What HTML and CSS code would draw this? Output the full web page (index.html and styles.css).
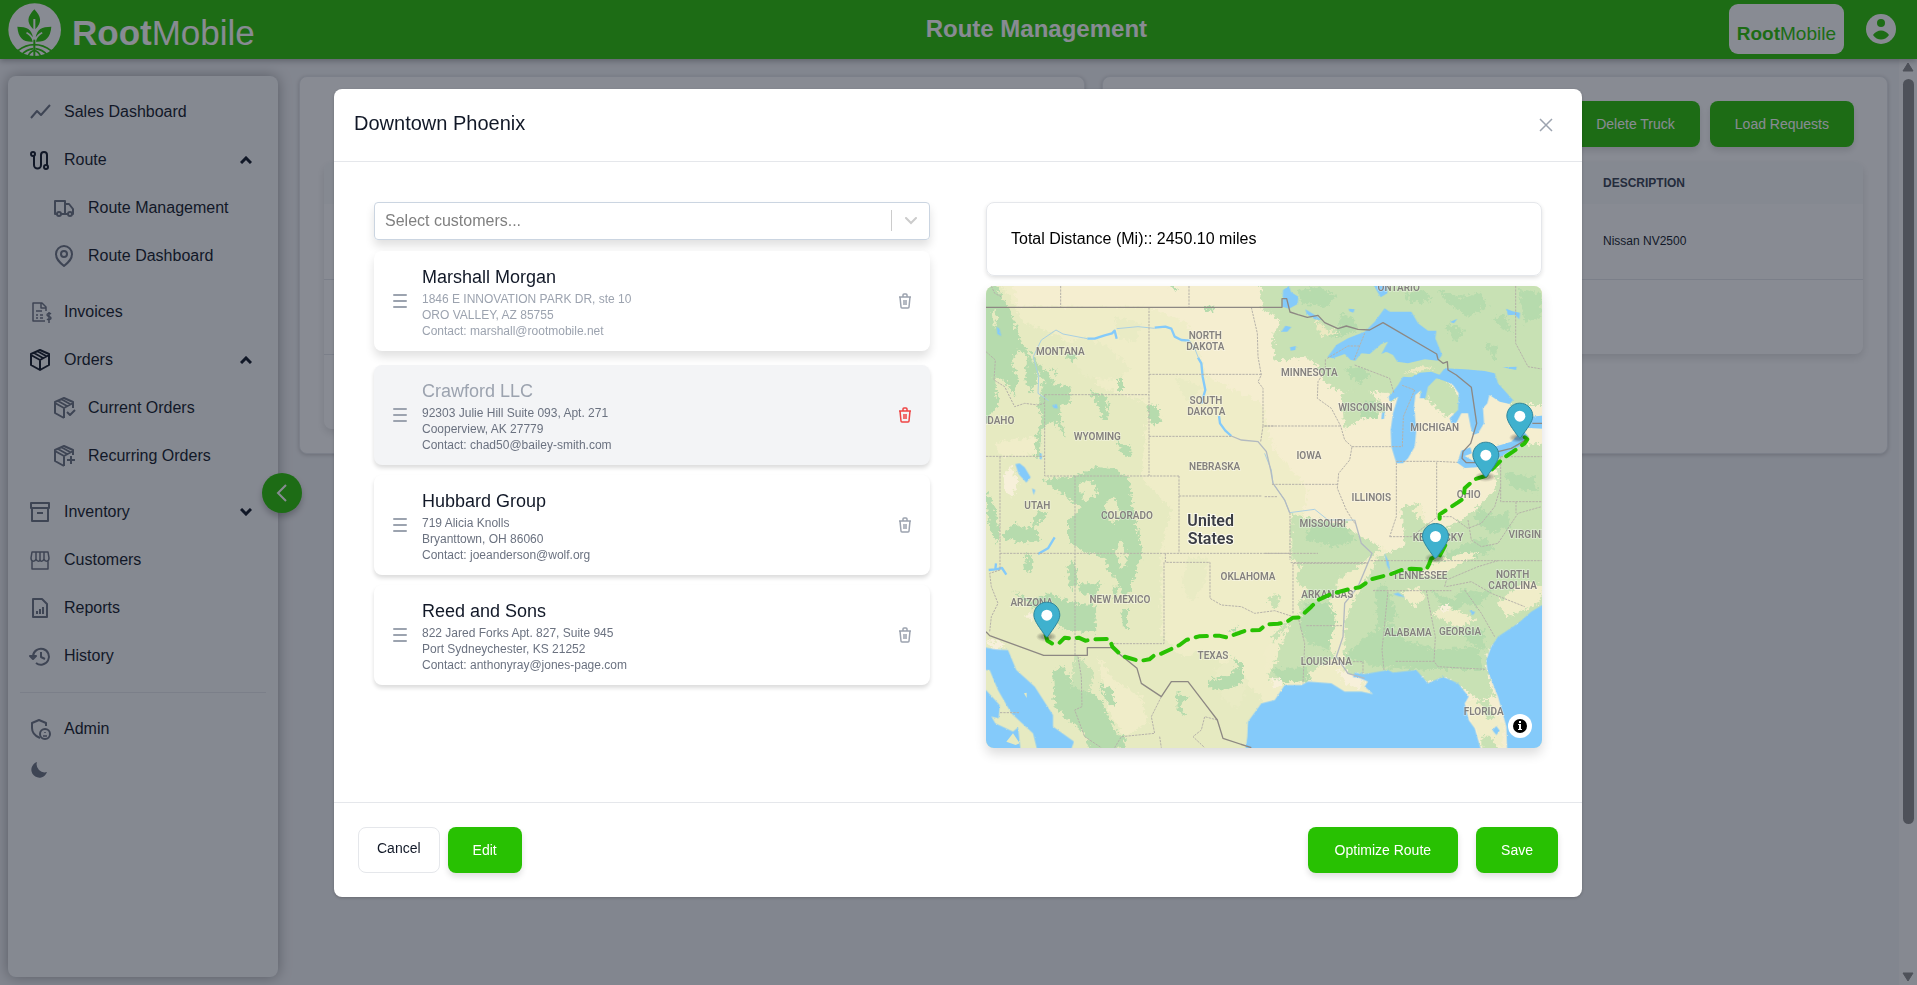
FILE: index.html
```html
<!DOCTYPE html>
<html lang="en">
<head>
<meta charset="utf-8">
<title>Route Management</title>
<link rel="stylesheet" href="styles.css">
</head>
<body>
<header class="topbar">
  <a class="brand" href="#">
    <svg class="brand-mark" viewBox="0 0 159 162" aria-hidden="true">
      <circle cx="80" cy="80" r="79" fill="#fff"/>
      <g fill="#28c102">
        <path d="M79 19C57 42 55 58 76 79V48h6v31C103 58 100 41 79 19z"/>
        <path d="M28 71c3 34 17 46 46 45-2-10-7-17-20-25l3-4c9 5 14 10 18 16C71 79 57 71 28 71z"/>
        <path d="M130 71c-3 34-17 46-46 45 2-10 7-17 20-25l-3-4c-9 5-14 10-18 16 4-24 18-32 47-32z"/>
        <path d="M76 110h6v52h-6z"/>
      </g>
      <g fill="none" stroke="#28c102" stroke-width="5">
        <path d="M30 143c14-11 30-18 49-18s36 7 50 18"/>
        <path d="M40 156c10-11 20-17 36-19M118 156c-10-11-20-17-36-19M60 160c4-10 9-15 19-18 10 3 15 8 19 18"/>
      </g>
    </svg>
    <span class="wordmark"><b>Root</b>Mobile</span>
  </a>
  <h1 class="page-title">Route Management</h1>
  <div class="account">
    <span class="company wordmark"><b>Root</b>Mobile</span>
    <button class="avatar" aria-label="Account">
      <svg viewBox="0 0 30 30"><circle cx="15" cy="15" r="15" fill="#fff"/><circle cx="15" cy="9" r="4" fill="#28c102"/><path d="M7 21c4-6 12-6 16 0-4 6-12 6-16 0z" fill="#28c102"/></svg>
    </button>
  </div>
</header>

<div class="shell">
  <nav class="sidebar" aria-label="Main">
    <ul class="menu">
      <li><a class="item" href="#"><svg class="icon" viewBox="0 0 24 24"><path d="M3 18l6-7 4 4 9-10"/></svg><span>Sales Dashboard</span></a></li>
      <li>
        <button class="item open"><svg class="icon" viewBox="0 0 24 24"><circle cx="5" cy="6" r="2"/><circle cx="18" cy="19" r="2"/><path d="M6 8v9a3.500 3.500 0 0 0 7 0V7a3 3 0 0 1 6 0v10"/></svg><span>Route</span><svg class="chev" viewBox="0 0 12 8"><path d="M1 7l5-5 5 5"/></svg></button>
        <ul class="submenu">
          <li><a class="item" href="#"><svg class="icon" viewBox="0 0 24 24"><path d="M5 18H3V5h10v13H9M13 8h4l4 5v5h-1M13 18h3"/><circle cx="7" cy="18" r="2"/><circle cx="18" cy="18" r="2"/></svg><span>Route Management</span></a></li>
          <li><a class="item" href="#"><svg class="icon" viewBox="0 0 24 24"><path d="M12 22c-5-4-8-7-8-12a8 8 0 0 1 16 0c0 5-3 8-8 12z"/><circle cx="12" cy="10" r="3"/></svg><span>Route Dashboard</span></a></li>
        </ul>
      </li>
      <li><a class="item" href="#"><svg class="icon thin" viewBox="0 0 24 24"><path d="M17 21H5V3h9l4 4v4M13 3v5h5M8 11h6M8 15h2M12 15h3M8 18h2M12 18h3M23 14c-1-1-4-1-4 1s4 1 4 3-3 2-4 1M21 12v11"/></svg><span>Invoices</span></a></li>
      <li>
        <button class="item open"><svg class="icon" viewBox="0 0 24 24"><path d="M12 2l9 4v11l-9 5-9-5V6zM3 7l9 5 9-5M12 12v10M6 5l9 5M9 3l9 5"/></svg><span>Orders</span><svg class="chev" viewBox="0 0 12 8"><path d="M1 7l5-5 5 5"/></svg></button>
        <ul class="submenu">
          <li><a class="item" href="#"><svg class="icon" viewBox="0 0 24 24"><path d="M21 12V6l-9-4-9 4v11l9 5M3 7l9 5 9-5M12 12v10M6 5l9 5M9 3l9 5M15 16l3 3 5-5"/></svg><span>Current Orders</span></a></li>
          <li><a class="item" href="#"><svg class="icon" viewBox="0 0 24 24"><path d="M21 11V6l-9-4-9 4v11l9 5M3 7l9 5 9-5M12 12v10M6 5l9 5M9 3l9 5M15 16h8M19 12v8"/></svg><span>Recurring Orders</span></a></li>
        </ul>
      </li>
      <li><button class="item"><svg class="icon" viewBox="0 0 24 24"><path d="M3 3h18v5H3zM4 8v13h16V8M9 13h6"/></svg><span>Inventory</span><svg class="chev" viewBox="0 0 12 8"><path d="M1 1l5 5 5-5"/></svg></button></li>
      <li><a class="item" href="#"><svg class="icon thin" viewBox="0 0 24 24"><path d="M4 4h16l1 6c0 4-4 4-5 1-1 3-4 3-4 0 0 3-3 3-4 0-1 3-5 3-5-1zM4 13v8h16v-8M8 4v7M12 4v7M16 4v7"/></svg><span>Customers</span></a></li>
      <li><a class="item" href="#"><svg class="icon" viewBox="0 0 24 24"><path d="M5 3h9l5 5v13H5zM9 18v-3M12 18v-5M15 18v-7"/></svg><span>Reports</span></a></li>
      <li><a class="item" href="#"><svg class="icon" viewBox="0 0 24 24"><path d="M5 12a8 8 0 1 1 3 7M2 12h6l-3 3zM13 8v5l4 2"/></svg><span>History</span></a></li>
    </ul>
    <hr class="rule">
    <a class="item" href="#"><svg class="icon" viewBox="0 0 24 24"><path d="M12 21c-5-2-8-6-8-10V6l7-3 7 3v3"/><circle cx="17" cy="17" r="5"/><path class="hair" d="M15 19h4M17 15v1"/></svg><span>Admin</span></a>
    <button class="theme" aria-label="Dark mode"><svg viewBox="0 0 20 20"><path d="M17 13A8 8 0 0 1 7 3a8 8 0 1 0 10 10z"/></svg></button>
  </nav>
  <button class="collapse" aria-label="Collapse menu"><svg viewBox="0 0 20 20"><path d="M14 2l-8 8 8 8"/></svg></button>

  <main class="content">
    <section class="panel">
      <div class="actions"></div>
      <table class="grid"><thead><tr><th></th></tr></thead><tbody><tr><td></td></tr><tr><td></td></tr><tr><td></td></tr></tbody></table>
    </section>
    <section class="panel">
      <div class="actions"><button class="btn">Delete Truck</button><button class="btn">Load Requests</button></div>
      <table class="grid"><thead><tr><th class="lead"></th><th>DESCRIPTION</th></tr></thead><tbody><tr><td></td><td>Nissan NV2500</td></tr><tr><td></td><td></td></tr></tbody></table>
    </section>
  </main>
  <div class="scroller" aria-hidden="true">
    <svg viewBox="0 0 12 10"><path d="M6 1l5 8H1z"/></svg>
    <div class="thumb"></div>
    <svg class="end" viewBox="0 0 12 10"><path d="M6 9L1 1h10z"/></svg>
  </div>
</div>

<div class="backdrop">
  <div class="modal" role="dialog" aria-labelledby="dlg-title">
    <div class="modal-head">
      <h2 id="dlg-title">Downtown Phoenix</h2>
      <button class="close" aria-label="Close"><svg viewBox="0 0 14 14"><path d="M1 1l12 12M13 1L1 13"/></svg></button>
    </div>
    <div class="modal-body">
      <div class="stops">
        <div class="picker">
          <select aria-label="Select customers"><option>Select customers...</option></select>
          <svg viewBox="0 0 12 8" aria-hidden="true"><path d="M1 1l5 5 5-5"/></svg>
        </div>
        <ul class="stop-list">
          <li class="stop lifted">
            <svg class="grip" viewBox="0 0 14 14"><path d="M1 1h12M1 7h12M1 13h12"/></svg>
            <div class="who"><h3>Marshall Morgan</h3><p>1846 E INNOVATION PARK DR, ste 10</p><p>ORO VALLEY, AZ 85755</p><p>Contact: marshall@rootmobile.net</p></div>
            <button class="del" aria-label="Remove"><svg viewBox="0 0 14 16"><path d="M1 4h12M2 4l1 10q0 1 1 1h6q1 0 1-1l1-10M5 4V2q0-1 1-1h2q1 0 1 1v2M6 7v5M8 7v5"/></svg></button>
          </li>
          <li class="stop hovered">
            <svg class="grip" viewBox="0 0 14 14"><path d="M1 1h12M1 7h12M1 13h12"/></svg>
            <div class="who"><h3>Crawford LLC</h3><p>92303 Julie Hill Suite 093, Apt. 271</p><p>Cooperview, AK 27779</p><p>Contact: chad50@bailey-smith.com</p></div>
            <button class="del" aria-label="Remove"><svg viewBox="0 0 14 16"><path d="M1 4h12M2 4l1 10q0 1 1 1h6q1 0 1-1l1-10M5 4V2q0-1 1-1h2q1 0 1 1v2M6 7v5M8 7v5"/></svg></button>
          </li>
          <li class="stop">
            <svg class="grip" viewBox="0 0 14 14"><path d="M1 1h12M1 7h12M1 13h12"/></svg>
            <div class="who"><h3>Hubbard Group</h3><p>719 Alicia Knolls</p><p>Bryanttown, OH 86060</p><p>Contact: joeanderson@wolf.org</p></div>
            <button class="del" aria-label="Remove"><svg viewBox="0 0 14 16"><path d="M1 4h12M2 4l1 10q0 1 1 1h6q1 0 1-1l1-10M5 4V2q0-1 1-1h2q1 0 1 1v2M6 7v5M8 7v5"/></svg></button>
          </li>
          <li class="stop">
            <svg class="grip" viewBox="0 0 14 14"><path d="M1 1h12M1 7h12M1 13h12"/></svg>
            <div class="who"><h3>Reed and Sons</h3><p>822 Jared Forks Apt. 827, Suite 945</p><p>Port Sydneychester, KS 21252</p><p>Contact: anthonyray@jones-page.com</p></div>
            <button class="del" aria-label="Remove"><svg viewBox="0 0 14 16"><path d="M1 4h12M2 4l1 10q0 1 1 1h6q1 0 1-1l1-10M5 4V2q0-1 1-1h2q1 0 1 1v2M6 7v5M8 7v5"/></svg></button>
          </li>
        </ul>
      </div>
      <div class="overview">
        <p class="distance">Total Distance (Mi):: 2450.10 miles</p>
        <div class="map">
          <svg class="map-art" viewBox="34 288 1668 1386" preserveAspectRatio="xMidYMid slice" role="img" aria-label="Route map">
            <defs>
              <filter id="rough" x="0" y="0" width="1" height="1"><feTurbulence type="fractalNoise" baseFrequency="0.09" numOctaves="3" seed="4"/><feDisplacementMap in="SourceGraphic" scale="30" xChannelSelector="R" yChannelSelector="G"/></filter>
              <filter id="coast" x="0" y="0" width="1" height="1"><feTurbulence type="fractalNoise" baseFrequency="0.2" numOctaves="2" seed="9"/><feDisplacementMap in="SourceGraphic" scale="6" xChannelSelector="R" yChannelSelector="G"/></filter>
              <g id="pin">
                <g transform="translate(-40 -40) scale(3)">
                  <g fill="#000" opacity=".5"><ellipse cx="13" cy="35" rx="10" ry="5" opacity=".12"/><ellipse cx="13" cy="35" rx="9" ry="4" opacity=".15"/><ellipse cx="13" cy="35" rx="8" ry="3" opacity=".2"/><ellipse cx="13" cy="35" rx="6" ry="3" opacity=".2"/><ellipse cx="13" cy="35" rx="5" ry="2" opacity=".2"/></g>
                  <path fill="#3fb1ce" stroke="#2f859a" d="M26.500 13.500C26.500 19 20 27 14.700 34.500 14 35.500 13 35.500 12.300 34.500 7 27 .5 19 .5 13.500.5 6.300 6.300.5 13.500.5S26.500 6.300 26.500 13.500z"/>
                  <circle cx="13.500" cy="13.500" r="5.500" fill="#fff"/>
                </g>
              </g>
            </defs>
            <rect x="34" y="288" width="1668" height="1386" fill="#efedc8"/>
            <g filter="url(#rough)">
              <rect x="0" y="250" width="1740" height="1460" fill="#efedc8"/>
              <path fill="#f5eed0" d="M110 250H1740V1700H1300L1280 1500 1200 1250 1230 1080 980 1000 1000 900 900 780 860 640 700 560 640 400 520 350H130z"/>
              <path fill="#e6eac1" d="M0 250H60L150 400 260 440 380 590 520 640 500 860 590 960 560 1080 560 1330 620 1400 700 1380 860 1520 840 1700H0z"/>
              <path fill="#e9ebc4" d="M260 470L330 440 400 470 470 540 420 570 330 560zM420 380L500 400 480 460 430 440zM640 1100L700 1110 690 1180 650 1240 620 1180zM720 1440L780 1400 820 1480 790 1560 740 1520zM600 560L680 590 640 640z"/>
              <path fill="#f0edc9" d="M370 1400L420 1470 500 1520 520 1600 450 1640 400 1560zM60 760L180 740 190 790 80 800z"/>
              <path fill="#f7f0da" d="M84 860L110 830 130 880 110 920 95 910zM90 850h30v70l-30-20zM40 1350l50 10-30 40zM155 1270h22v16h-22z"/>
              <g transform="translate(870 240)">
                <path fill="#c8e1b4" d="M-10 0H860V405H735L700 380 640 330 560 330 545 340 480 390 440 330 380 400 375 370 290 360 230 365 180 340 165 300 130 260 30 275 25 200 50 150 -10 112z"/>
                <path fill="#c8e1b4" d="M490 390L520 330 560 345 590 390 585 430 540 440zM230 370L300 350 370 420 330 440 280 450 240 480zM700 530L860 520V720H700z"/>
                <path fill="#b6dbad" d="M100 60l60-10 60 30-40 30-70-10zM420 70l60-10 20 30-60 10zM520 60l70 20 60-10 20 40-60 30-60-40zM760 60l70 10v70l-50 20zM190 200l40-30 50 5-40 25zM540 160l60 20-30 40zM680 150l40-20 20 60zM660 220l40 10-10 40zM240 300l50-10 30 30-40 20zM230 130l40 20 10 30-60-10zM290 400l40-10 10 50-50 10z"/>
                <path fill="#ece9c2" d="M420 310l50-25 40 10-60 10zM150 150l40 30 40 10-60 10zM640 340l30-20-30 30z"/>
              </g>
              <g transform="translate(870 840)">
                <path fill="#c8e1b4" d="M80 130L160 150 240 170 300 205 350 230 280 290 220 330 215 380 190 390 205 450 195 520 210 560 150 600 60 640 10 620 40 560 20 500 60 460 110 440 100 400 130 360 90 330 110 290 80 260z"/>
                <path fill="#c8e1b4" d="M300 340L340 260 420 230 410 110 470 100 480 160 520 190 620 130 690 60 700 -30H860V400L770 460 700 510 670 540 665 600 690 680 640 690 600 660 540 620 500 640 460 620 370 620 280 620 240 600 240 460 260 400z"/>
                <path fill="#b6dbad" d="M120 400L195 400 215 450 190 540 130 520 105 470zM20 600l100-10 20 40-90 10zM240 560L300 500 380 460 420 510 520 540 640 530 655 600 500 600 330 590zM330 360l30-20 40 100-60 40zM500 360l60 30 30-30 60 10 50-20-60 60-40-10-50 40zM560 240l100-40 30 40-80 30-70 40-40-10zM140 160l100 0 30 50-60 20-90-20zM600 480l60 0 0 60-50-20zM640 110l50 30 40-20 10 50-60 20-50-40zM720 10l90 10 10 50-80-20z"/>
                <path fill="#f0edc9" d="M480 290l110-40 60-5-70 40-60 40-50-10zM700 400l80-70 60 20-20 50-90 40zM410 370l50-20 20 30-30 30zM500 430l50-20 90 40-60 20zM610 690l60 0 50 80-10 60-50 10-40-80zM80 460l-80 160 0-80zM440 120l30-20 10 60z"/>
                <path fill="#c8e1b4" d="M640 690l30 0 20 50-20 10zM650 800l30 0 20 40-50 10z"/>
                <path fill="#f7f0da" d="M525 410l25-8 5 20-20 5zM20 625l25 0 10 25-30 5zM215 600l90 20-20 40-40-20z"/>
              </g>
              <g fill="#b6dbad">
                <path d="M20 250L60 280 110 370 135 450 175 500 190 560 170 610 150 560 160 500 130 480 110 520 130 560 120 620 90 570 60 560 70 640 34 700 0 720V250z"/>
                <path d="M180 510l40 40 20 30-20 0-40-40zM230 530l20 20-10 5zM205 575L290 590 285 640 255 645 270 740 235 690 200 720 195 800 180 800 185 740 205 690 190 650zM345 600l50 20 10 70-20 0-20-50zM430 560l15 10 0 30-15 0zM515 650l30-5 15 50-30 10zM685 350l35 0-10 15-20 0zM420 750l50 20 0 30-20 0zM270 500l35-10-10 25zM585 288l25 5-5 10z"/>
                <path d="M205 870l90-10 70-30 60 10 40 30 15 120 25 100-20 50-20 70-25 5-15-60-15 10-20-60-60-20-50-30 0-60 40-40-40-30zM120 1000l40 20 30-60 30 10-40 40 20 40-60 10-60-20zM34 900l30 60 10 100-20-20-20-80zM150 1090l15 0 10 50-20 10zM275 1130l25-20 10 60-20 30zM115 1200l50 30 60-20 70 30 65 5 5 80-70 0-50-20-80-60zM440 1260l20 0 0 60-15-10zM310 1180l70 0-20 40-40-10zM415 1190l15 0-5 40z"/>
                <path d="M235 1440l30-10 25 50 30 10 60 40 20 50 45 80-45 40H350l-20-70-50-40-40-40zM700 1470l60-10 30-30-20-30 35 20 0 60-60 20-45-10zM605 1510l35 10-20 20 10 40-20-20zM370 1480l45 20 5 50-20-10zM420 1630l30 10 0 30-40 10zM760 1320l30-10-10 20z"/>
              </g>
              <path fill="#c8e1b4" d="M855 288l60 0 0 60-40 0zM300 1390l60 60-20 60-50-20zM880 1230l20-20 20 20-20 30z"/>
              <path fill="#e6eac1" d="M310 880l40-10 20 40-40 30zM390 940l30-20 20 60-30 20zM420 1080l20-30 20 60-20 30zM50 360l20 20-10 40z"/>
            </g>

            <g fill="#84cafa" filter="url(#coast)">
              <g transform="translate(870 240)">
                <path d="M188 262L215 225 250 205 300 185 330 155 360 115 375 125 440 125 460 160 490 182 515 182 512 205 532 255 520 272 480 268 430 280 398 275 385 255 365 245 350 252 370 215 350 222 315 252 290 250 272 272 258 270 240 252 205 265z"/>
                <path d="M395 580L380 530 378 480 385 430 400 380 375 395 372 380 400 345 415 320 440 322 465 308 500 305 540 320 575 322 600 340 560 340 515 325 490 350 482 385 465 385 470 360 452 375 448 410 455 480 450 530 430 565 415 580z"/>
                <path d="M540 295L600 298 660 303 690 310 700 340 745 390 735 402 705 395 670 372 655 360 675 372 668 400 655 415 658 460 640 490 625 495 618 470 610 430 590 430 575 458 560 460 555 445 580 420 582 370 565 345 520 320z"/>
                <path d="M578 578L590 542 617 532 622 550 600 558 625 572 690 530 740 515 775 480 790 500 785 520 740 540 700 565 660 590 600 594zM800 440L850 435V477L780 473z"/>
                <path d="M55 60l18-12 6 18 22 14-2 22-26 14-20-6zM328 48h40v22l-20 12zM50 185l12-18 18 4-12 14zM76 232l18-4-2 12-14 2zM122 118l30 18 18 14-20-2-24-16zM252 116l18 2-4 10-12-4zM556 156l22-10-10 14zM724 116l20 8 22 4-2 20-14-14-20 2zM714 292l42-2-2 10zM352 430l8-8-2 24-8 2z"/>
              </g>
              <g transform="translate(870 840)">
                <path d="M-60 860L-52 800-50 755-10 700 30 690 60 645 110 645 130 635 200 640 240 665 290 665 325 672 300 650 310 635 280 622 265 622 270 608 300 612 370 600 385 608 455 600 490 640 535 620 580 640 612 680 600 700 612 750 630 775 655 860z"/>
                <path d="M850 395L800 425 760 460 700 500 680 530 665 570 668 600 700 680 725 770 728 860H850zM683 780L695 768 705 782 695 795zM360 250l12 25 4 30-10-20zM385 372l15-4 22 14-20-4zM614 420l18 6-8 10z"/>
              </g>
              <path d="M20 1370L60 1378 100 1380 125 1440 180 1490 235 1575 235 1610 298 1655 285 1690H190L175 1630 110 1570 70 1500 45 1440 20 1440zM20 1500L34 1500 75 1545 72 1585 50 1580 62 1600 115 1625 130 1612 140 1700H20z"/>
              <path d="M122 822L135 820 150 832 168 862 155 878 132 852zM66 412l8 4 6 22-12-6zM232 646l14-4 4 14-12-2zM195 790h6v18h-6zM172 895l10 5-5 15z"/>
            </g>
            <path fill="#e6eac1" d="M95 1655l20-25 20 30-12 5zM148 1510l8-2 0 16z"/>

            <g fill="none" stroke="#84cafa" stroke-width="7" stroke-linejoin="round">
              <path d="M338 446L360 446 390 436 412 430 420 422 426 446M540 413L572 410 590 416 600 440 620 450 645 452M670 503L680 520 684 560 692 600 680 640M733 678L736 700 752 722 770 738M190 1092L220 1075 240 1042M42 1140L62 1138 64 1120M64 1138L82 1134 95 1154" />
            </g>
            <g fill="none" stroke="#a9cfe2" stroke-width="3">
              <path d="M222 632L190 610 192 560 176 500 200 450 244 420 265 432 338 446M426 416L490 410 540 415M645 452L662 480 672 505M870 790L890 840 895 880 930 930 945 968 1020 958 1060 990 1140 990"/>
            </g>
            <g fill="none" stroke="#b3bac0" stroke-width="4"><path d="M770 738L800 750 850 755 875 785 888 840 895 880 930 930 945 968M1140 990L1160 1060 1192 1090 1150 1190 1110 1240 1105 1340 1085 1400 1120 1450 1170 1465"/></g>

            <g fill="none" stroke="#b5b1a9" stroke-width="3" stroke-dasharray="7 3">
              <path d="M258 288V350M643 288V350M523 352V858M523 553H860M523 739H770M210 614H523M210 614V858H613M830 352L848 430 850 500 860 555 850 575 865 595V708H900M865 708L858 755M34 799H210M76 799V1140L45 1150 50 1190 70 1240 50 1280 45 1325M34 485L62 510 58 570 90 590 120 650 150 640 190 645 210 640M76 1090H1030M301 858V1396M613 858V1090M613 918H860M572 1090V1117H706V1225L740 1245 800 1250 840 1270 900 1262 955 1280M568 1117V1361H410M310 1400L320 1460 322 1550 300 1560 330 1640 380 1673M560 1520L530 1580 540 1630 440 1640 420 1673M555 1640L560 1673M76 1568H135M728 1590L690 1580 680 1620 655 1640 690 1673M50 288L60 310 80 320"/>
              <g transform="translate(870 240)"><path d="M182 268V300L160 335 158 385 200 415 228 468 240 510 262 530 255 570 222 610 218 655 245 720 270 760M0 468H228M22 643H218M0 680H40M262 530H412M395 578V740L375 800M395 574H516L578 577M516 577V740M188 265L250 228H285M268 270L300 190M270 285L375 325 388 370M413 530L416 440 450 360 410 345M753 48V220L790 290 831 297M708 560V695H831M0 850H76M76 728V870M78 878H310M318 872H831M708 560H831M375 800L440 800 480 770 520 740 560 740 610 775 650 760 690 710 708 650"/></g>
              <g transform="translate(870 840)"><path d="M358 600L352 540 370 362M485 362L512 500 508 575M325 362H560M393 574H508L520 590 665 598M265 575H295V610M125 467H235M85 430V280H310M100 440L120 520 115 640M545 350L620 335 680 370 780 410M600 360L650 430 690 500M540 350L545 330 640 290 700 272M610 150L620 210 650 230 700 220 760 130 831 110M754 95V130"/></g>
            </g>
            <g fill="none" stroke="#8d8883" stroke-width="4" stroke-linejoin="round">
              <path d="M34 352H922V326H936L946 366 970 374 998 382 1030 376 1050 398 1090 416 1115 408 1150 418 1185 420 1225 398 1386 492 1390 508 1405 520 1418 515 1420 540 1445 555 1490 592 1506 700 1488 760 1465 785 1462 805 1475 818 1500 818 1570 785 1610 775 1650 752M1673 700H1702"/>
              <path d="M34 1325L45 1337 207 1396H338V1373H410L450 1405 487 1435 500 1480 560 1520 590 1475 640 1475 690 1540 728 1590 745 1645 830 1673"/>
            </g>

            <g class="states">
              <text x="1272" y="303">ONTARIO</text>
              <text x="257" y="496">MONTANA</text>
              <text x="692" y="448">NORTH</text><text x="692" y="481">DAKOTA</text>
              <text x="694" y="641">SOUTH</text><text x="695" y="674">DAKOTA</text>
              <text x="74" y="701">IDAHO</text>
              <text x="368" y="749">WYOMING</text>
              <text x="720" y="840">NEBRASKA</text>
              <text x="1004" y="557">MINNESOTA</text>
              <text x="1172" y="664">WISCONSIN</text>
              <text x="1380" y="722">MICHIGAN</text>
              <text x="1003" y="807">IOWA</text>
              <text x="1190" y="932">ILLINOIS</text>
              <text x="1482" y="923">OHIO</text>
              <text x="1044" y="1012">MISSOURI</text>
              <text x="1390" y="1053">KENTUCKY</text>
              <text x="1665" y="1043">VIRGINIA</text>
              <text x="188" y="957">UTAH</text>
              <text x="457" y="986">COLORADO</text>
              <text x="171" y="1248">ARIZONA</text>
              <text x="436" y="1238">NEW MEXICO</text>
              <text x="820" y="1169">OKLAHOMA</text>
              <text x="715" y="1407">TEXAS</text>
              <text x="1336" y="1167">TENNESSEE</text>
              <text x="1058" y="1224">ARKANSAS</text>
              <text x="1614" y="1164">NORTH</text><text x="1614" y="1197">CAROLINA</text>
              <text x="1300" y="1338">ALABAMA</text>
              <text x="1456" y="1335">GEORGIA</text>
              <text x="1055" y="1426">LOUISIANA</text>
              <text x="1527" y="1574">FLORIDA</text>
            </g>
            <g class="country"><text x="708" y="1007">United</text><text x="708" y="1063">States</text></g>

            <path class="route" d="M213 1335L218 1352 235 1362 255 1358 270 1343 290 1346 312 1343 332 1352 360 1348 405 1347 413 1370 442 1398 463 1404 495 1413 524 1408 540 1395 560 1391 615 1365 635 1350 673 1339 733 1337 755 1342 793 1329 812 1322 855 1320 875 1303 910 1301 932 1298 955 1283 975 1282 1010 1250 1030 1230 1070 1212 1125 1197 1155 1192 1190 1168 1250 1152 1280 1140 1310 1136 1355 1139 1363 1123 1370 1105 1395 1098 1412 1065 1395 1000 1395 973 1450 937 1467 925 1470 895 1500 868 1532 858 1585 805 1615 785 1650 760 1658 748 1648 740"/>
            <use href="#pin" x="216" y="1275"/>
            <use href="#pin" x="1635" y="678"/>
            <use href="#pin" x="1533" y="795"/>
            <use href="#pin" x="1382" y="1039"/>
          </svg>
          <button class="info" aria-label="Map attribution"><svg viewBox="0 0 24 24"><circle cx="12" cy="12" r="7"/><path fill="#fff" d="M11 7h2v2h-2zM10 10h3v5h1v1h-4v-1h1v-4h-1z"/></svg></button>
        </div>
      </div>
    </div>
    <div class="modal-foot">
      <div class="group"><button class="btn plain">Cancel</button><button class="btn">Edit</button></div>
      <div class="group wide"><button class="btn roomy">Optimize Route</button><button class="btn">Save</button></div>
    </div>
  </div>
</div>
</body>
</html>
```
FILE: styles.css
```css
* { box-sizing: border-box; }
body {
  margin: 0;
  height: 100vh;
  overflow: hidden;
  display: flex;
  flex-direction: column;
  background: #f3f4f6;
  color: #111827;
  font: 16px/24px "Liberation Sans", Arial, sans-serif;
}
h1, h2, h3, p, ul { margin: 0; padding: 0; font-weight: 400; }
ul { list-style: none; }
a { color: inherit; text-decoration: none; }
button { margin: 0; padding: 0; border: 0; background: none; color: inherit; font: inherit; cursor: pointer; }
svg { display: block; }

.topbar {
  flex: none;
  height: 59px;
  display: flex;
  align-items: center;
  background: #28c102;
  color: #fff;
  box-shadow: 0 2px 6px rgba(0, 0, 0, .3);
  z-index: 1;
}
.brand { width: 344px; padding-left: 8px; display: flex; align-items: center; gap: 11px; }
.brand-mark { width: 53px; height: 54px; }
.wordmark { font-size: 35px; line-height: 40px; white-space: nowrap; }
.brand .wordmark { padding-top: 6px; }
.page-title { flex: 1; padding-bottom: 2px; text-align: center; font-size: 24px; font-weight: 700; line-height: 32px; }
.account { padding-right: 21px; padding-bottom: 2px; display: flex; align-items: center; gap: 22px; }
.company.wordmark {
  height: 50px;
  padding: 10px 8px 0;
  border-radius: 9px;
  background: #fff;
  color: #28c102;
  font-size: 19px;
}
.avatar svg { width: 30px; height: 30px; }

.shell { flex: 1; min-height: 0; display: flex; position: relative; }
.sidebar {
  flex: none;
  width: 270px;
  margin: 17px 0 8px 8px;
  padding: 16px 12px;
  border-radius: 8px;
  background: #f9fafb;
  box-shadow: 0 0 14px rgba(0, 0, 0, .35);
}
.menu, .submenu { display: flex; flex-direction: column; gap: 8px; }
.submenu { padding: 8px 0 8px 24px; }
.item { width: 100%; height: 40px; padding: 0 14px 0 8px; display: flex; align-items: center; gap: 12px; text-align: left; }
.item span { flex: 1; white-space: nowrap; }
.icon { width: 24px; height: 24px; fill: none; stroke: #6b7280; stroke-width: 2; stroke-linejoin: round; }
.icon.thin, .icon .hair { stroke-width: 1.5; }
.open .icon { stroke: #111827; }
.chev { width: 12px; height: 8px; fill: none; stroke: #111827; stroke-width: 3; }
.rule { margin: 16px 0; border: 0; border-top: 1px solid #e5e7eb; }
.theme { padding: 10px; }
.theme svg { width: 20px; height: 20px; fill: #6b7280; }
.collapse {
  position: absolute;
  left: 262px;
  top: 414px;
  width: 40px;
  height: 40px;
  display: grid;
  place-items: center;
  border-radius: 50%;
  background: #28c102;
  box-shadow: 0 4px 6px rgba(0, 0, 0, .25);
}
.collapse svg { width: 20px; height: 20px; fill: none; stroke: #fff; stroke-width: 2; }

.content { flex: 1; padding: 17px 11px 0 21px; display: grid; grid-template-columns: 1fr 1fr; gap: 17px; align-content: start; }
.panel { padding: 24px; border: 1px solid #e5e7eb; border-radius: 8px; background: #fff; box-shadow: 0 1px 4px rgba(0, 0, 0, .2); }
.actions { min-height: 46px; margin-bottom: 15px; padding-right: 9px; display: flex; justify-content: flex-end; gap: 10px; }
.btn {
  height: 46px;
  padding: 0 25px;
  border-radius: 8px;
  background: #28c102;
  color: #fff;
  font-size: 14px;
  line-height: 20px;
  box-shadow: 0 4px 6px rgba(0, 0, 0, .12);
}
.grid { width: 100%; border-collapse: collapse; table-layout: fixed; border-radius: 8px; overflow: hidden; font-size: 12px; line-height: 16px; box-shadow: 0 4px 8px rgba(0, 0, 0, .12); }
.grid th { height: 42px; padding: 0 24px; background: #f9fafb; color: #374151; text-align: left; font-weight: 700; }
.grid .lead { width: 452px; }
.grid td { height: 75px; padding: 0 24px; border-bottom: 1px solid #e5e7eb; }
.grid tr:last-child td { border-bottom: 0; }
.scroller { flex: none; width: 18px; display: flex; flex-direction: column; align-items: center; background: #fafafa; padding: 3px 0; }
.scroller svg { width: 12px; height: 10px; fill: #8b8b8b; stroke: #8b8b8b; stroke-linejoin: round; }
.scroller .end { margin-top: auto; }
.thumb { width: 11px; height: 81%; margin-top: 7px; border-radius: 6px; background: #8b8b8b; }

.backdrop { position: fixed; inset: 0; z-index: 2; padding: 16px 17px 16px 16px; display: flex; align-items: center; justify-content: center; background: rgba(17, 24, 39, .5); }
.modal { width: 100%; max-width: 1248px; border-radius: 8px; background: #fff; box-shadow: 0 1px 3px rgba(0, 0, 0, .2); }
.modal-head { padding: 20px 28px 24px 20px; display: flex; align-items: center; justify-content: space-between; border-bottom: 1px solid #e5e7eb; }
.modal-head h2 { font-size: 20px; line-height: 28px; }
.close { padding-top: 4px; }
.close svg { width: 14px; height: 14px; margin: 0 1px; fill: none; stroke: #9ca3af; stroke-width: 1.5; }
.modal-body { padding: 40px 40px 54px; display: grid; grid-template-columns: 1fr 1fr; gap: 56px; }

.picker { display: grid; align-items: center; border-radius: 4px; box-shadow: 0 6px 10px rgba(0, 0, 0, .12); }
.picker select {
  grid-area: 1 / 1;
  width: 100%;
  height: 38px;
  padding: 0 10px;
  appearance: none;
  border: 1px solid #cbd5e1;
  border-radius: 4px;
  background: linear-gradient(#ccc, #ccc) right 37px center / 1px 21px no-repeat #fff;
  color: #808080;
  font: inherit;
}
.picker svg { grid-area: 1 / 1; justify-self: end; width: 12px; height: 8px; margin-right: 13px; fill: none; stroke: #ccc; stroke-width: 2; stroke-linecap: round; pointer-events: none; }
.stop-list { margin-top: 11px; display: flex; flex-direction: column; gap: 10px; }
.stop { padding: 12px 18px 12px 19px; display: flex; align-items: center; border-radius: 8px; background: #fff; color: #6b7280; box-shadow: 0 3px 4px rgba(0, 0, 0, .14); }
.stop h3 { color: #111827; font-size: 18px; line-height: 28px; }
.stop p { font-size: 12px; line-height: 16px; }
.stop.lifted { margin-bottom: 4px; color: #9ca3af; box-shadow: 0 6px 10px rgba(0, 0, 0, .12); }
.stop.hovered { background: #f3f4f6; }
.stop.hovered h3 { color: #9ca3af; }
.grip { width: 14px; height: 14px; margin-right: 15px; fill: none; stroke: #9ca3af; stroke-width: 2; stroke-linecap: round; }
.who { flex: 1; }
.del { color: #9ca3af; }
.del svg { width: 14px; height: 16px; fill: none; stroke: currentColor; stroke-linejoin: round; stroke-width: 1.5; }
.hovered .del { color: #ef4444; }

.distance { padding: 24px; border: 1px solid #e5e7eb; border-radius: 8px; color: #000; box-shadow: 0 2px 4px rgba(0, 0, 0, .12); }
.map { position: relative; margin-top: 10px; border-radius: 8px; overflow: hidden; box-shadow: 0 6px 12px rgba(0, 0, 0, .14); }
.map-art { width: 100%; aspect-ratio: 1668 / 1386; }
.states { font: 600 30px Roboto, sans-serif; fill: #84817e; text-anchor: middle; paint-order: stroke; stroke: rgba(255, 255, 255, .4); stroke-width: 4px; }
.country { font: 600 48px Roboto, sans-serif; fill: #3b3d44; text-anchor: middle; paint-order: stroke; stroke: rgba(255, 255, 255, .7); stroke-width: 6px; }
.route { fill: none; stroke: #28c102; stroke-width: 12; stroke-linecap: round; stroke-linejoin: round; stroke-dasharray: 34 24; }
.info { position: absolute; right: 10px; bottom: 10px; border-radius: 50%; background: #fff; }
.info svg { width: 24px; height: 24px; }

.modal-foot { padding: 24px; display: flex; justify-content: space-between; border-top: 1px solid #e5e7eb; }
.group { display: flex; gap: 8px; }
.group.wide { gap: 18px; }
.plain { padding: 0 18px 4px; border: 1px solid #e5e7eb; background: #fff; color: #111827; box-shadow: none; }
.roomy { padding: 0 27px; }
```
